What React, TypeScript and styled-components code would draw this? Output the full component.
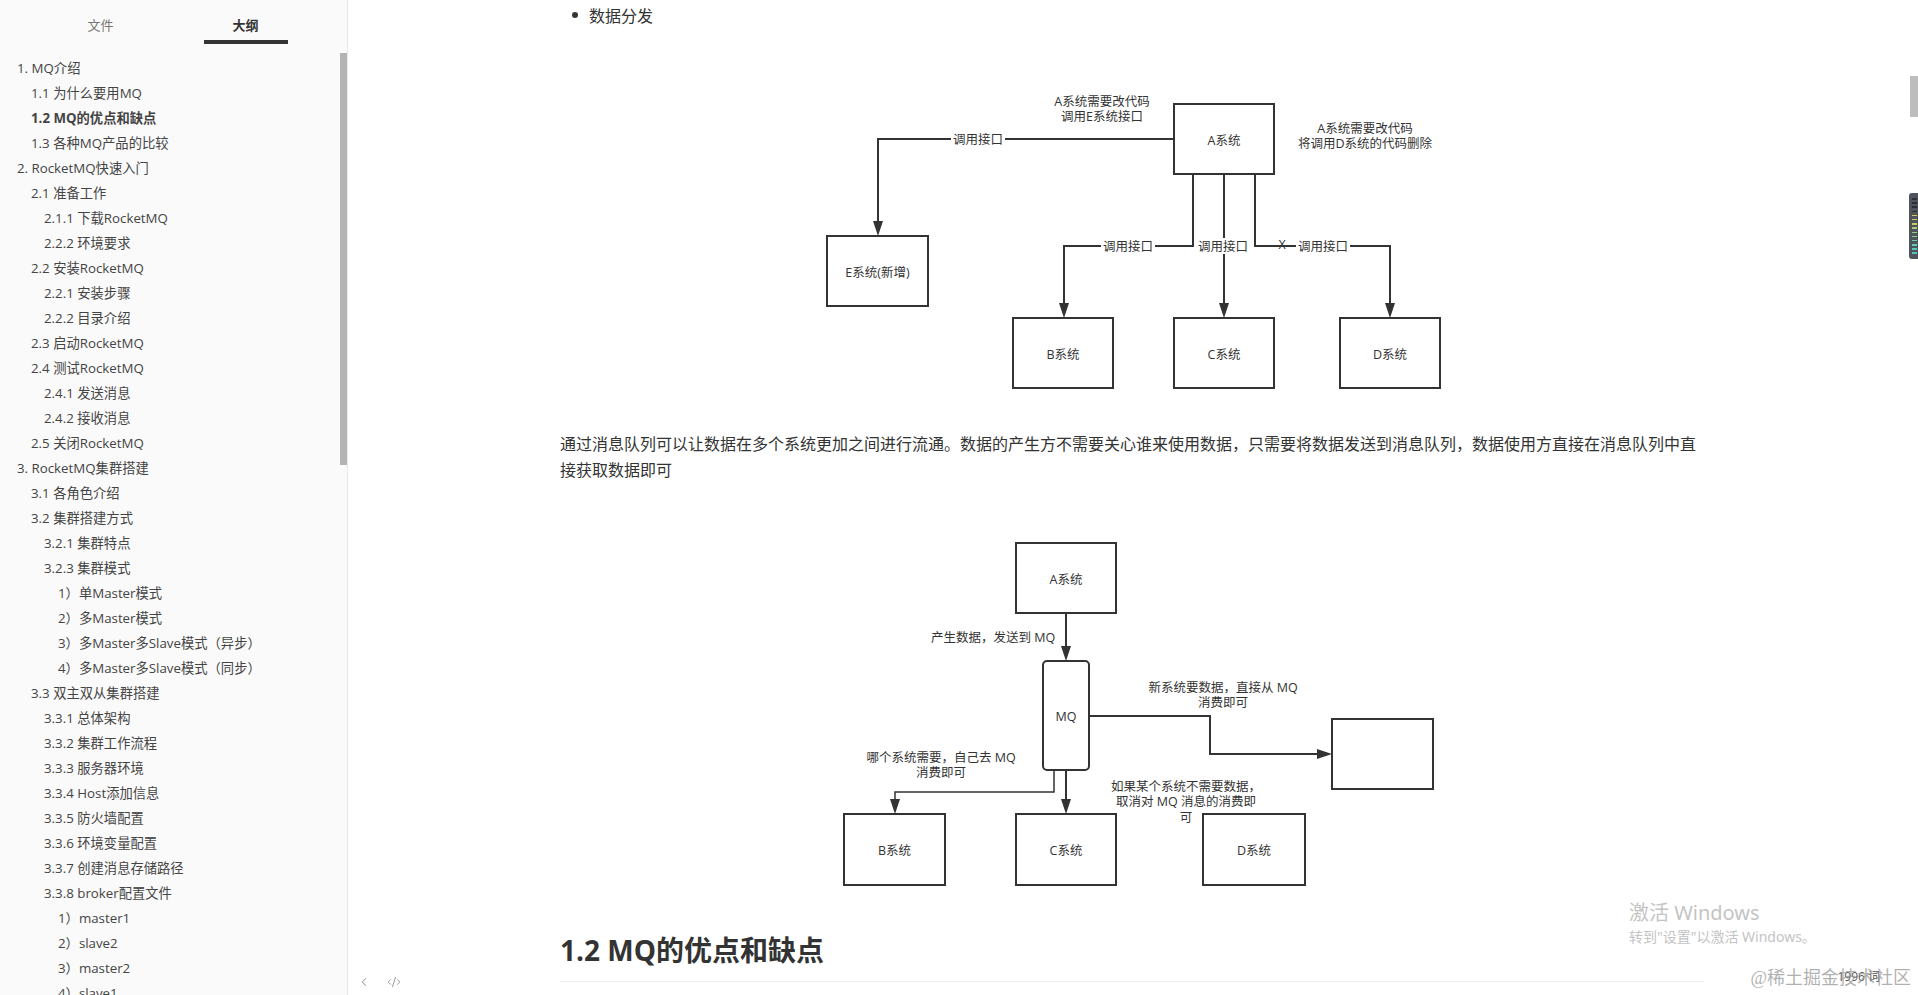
import React from "react";
import styled, { createGlobalStyle } from "styled-components";
import { ChevronLeft, CodeXml } from "lucide-react";

const GlobalStyle = createGlobalStyle`
    html, body {
        margin: 0;
        padding: 0;
        height: 100%;
        overflow: hidden;
    }
    body {
        font-family: "Open Sans", "Noto Sans CJK SC", sans-serif;
        color: #333;
        background: #fff;
    }
`;

const Shell = styled.div`
    display: flex;
    width: 1918px;
    height: 995px;
    overflow: hidden;
`;

/* 左侧：文件 / 大纲 */
const Sidebar = styled.aside`
    position: relative;
    flex: 0 0 347px;
    height: 100%;
    background: #fafafa;
    border-right: 1px solid #e8e8e8;
    overflow: hidden;
`;
const TabBar = styled.div`
    display: flex;
    padding-left: 28px;
    height: 44px;
`;
const Tab = styled.div<{ $active?: boolean }>`
    width: 145px;
    display: flex;
    flex-direction: column;
    align-items: center;
    padding-top: 15px;
    box-sizing: border-box;
    font-size: 13px;
    line-height: 20px;
    color: ${(p) => (p.$active ? "#333" : "#777")};
    font-weight: ${(p) => (p.$active ? 700 : 400)};
`;
const TabLine = styled.span<{ $active?: boolean }>`
    margin-top: 5px;
    width: 84px;
    height: 4px;
    background: ${(p) => (p.$active ? "#333" : "transparent")};
`;
const OutlineList = styled.ul`
    list-style: none;
    margin: 0;
    padding: 12px 0 0;
`;
const OutlineItem = styled.li<{ $level: number; $bold?: boolean }>`
    height: 25px;
    line-height: 25px;
    font-size: 13.3px;
    color: #444;
    white-space: nowrap;
    padding-left: ${(p) => [17, 31, 44, 58][p.$level - 1]}px;
    font-weight: ${(p) => (p.$bold ? 700 : 400)};
`;
const SideThumb = styled.div`
    position: absolute;
    left: 340px;
    top: 53px;
    width: 7px;
    height: 412px;
    background: #b3b3b3;
`;

/* 右侧：正文 */
const Main = styled.main`
    position: relative;
    flex: 1;
    height: 100%;
    overflow: hidden;
    background: #fff;
`;
const Content = styled.div`
    width: 1144px;
    margin-left: 212px;
    padding-top: 2px;
`;
const Bullets = styled.ul`
    list-style: none;
    margin: 0;
    padding: 0;
`;
const Bullet = styled.li`
    display: flex;
    align-items: center;
    height: 26px;
    font-size: 16px;
    color: #333;
`;
const Dot = styled.span`
    width: 6px;
    height: 6px;
    border-radius: 50%;
    background: #333;
    margin: 0 11px 0 12px;
`;
const Figure = styled.svg<{ $gap?: number }>`
    display: block;
    width: 1144px;
    margin-top: ${(p) => p.$gap ?? 0}px;
`;
const Para = styled.p`
    margin: 14px 0 0;
    font-size: 16px;
    line-height: 25.6px;
    color: #333;
`;
const Heading = styled.h2`
    margin: 16px 0 0;
    padding-bottom: 12px;
    font-size: 28px;
    line-height: 38px;
    font-weight: 700;
    color: #333;
    border-bottom: 1px solid #eee;
`;
const Footer = styled.div`
    position: absolute;
    left: 9px;
    bottom: 6px;
    display: flex;
    align-items: center;
    gap: 16px;
    color: #888;
`;
const WordCount = styled.span`
    position: absolute;
    right: 38px;
    bottom: 10px;
    font-size: 12px;
    color: #555;
`;
const Watermark = styled.div`
    position: absolute;
    left: 1281px;
    top: 899px;
    color: #c4c4c4;
    font-family: "Noto Sans", "Noto Sans CJK SC", sans-serif;
`;
const WatermarkTitle = styled.div`
    font-size: 20px;
    line-height: 28px;
`;
const WatermarkSub = styled.div`
    font-size: 14px;
    line-height: 20px;
`;
const SiteMark = styled.span`
    position: absolute;
    right: 7px;
    bottom: 6px;
    font-size: 18px;
    color: rgba(150, 150, 150, 0.75);
    font-family: "Liberation Serif", "Noto Sans CJK SC", serif;
`;
const MainThumb = styled.div`
    position: absolute;
    right: 0;
    top: 76px;
    width: 8px;
    height: 41px;
    background: #bdbdbd;
`;
const Meter = styled.div`
    position: absolute;
    right: -3px;
    top: 193px;
    width: 12px;
    height: 66px;
    padding: 5px 2px 5px 3px;
    box-sizing: border-box;
    border-radius: 3px;
    background: #4f535c;
    display: flex;
    flex-direction: column;
    justify-content: space-between;
`;
const MeterBar = styled.span<{ $color: string }>`
    height: 1.5px;
    width: 5px;
    background: ${(p) => p.$color};
`;

const outline: [number, string, boolean?][] = [
    [1, "1. MQ介绍"],
    [2, "1.1 为什么要用MQ"],
    [2, "1.2 MQ的优点和缺点", true],
    [2, "1.3 各种MQ产品的比较"],
    [1, "2. RocketMQ快速入门"],
    [2, "2.1 准备工作"],
    [3, "2.1.1 下载RocketMQ"],
    [3, "2.2.2 环境要求"],
    [2, "2.2 安装RocketMQ"],
    [3, "2.2.1 安装步骤"],
    [3, "2.2.2 目录介绍"],
    [2, "2.3 启动RocketMQ"],
    [2, "2.4 测试RocketMQ"],
    [3, "2.4.1 发送消息"],
    [3, "2.4.2 接收消息"],
    [2, "2.5 关闭RocketMQ"],
    [1, "3. RocketMQ集群搭建"],
    [2, "3.1 各角色介绍"],
    [2, "3.2 集群搭建方式"],
    [3, "3.2.1 集群特点"],
    [3, "3.2.3 集群模式"],
    [4, "1）单Master模式"],
    [4, "2）多Master模式"],
    [4, "3）多Master多Slave模式（异步）"],
    [4, "4）多Master多Slave模式（同步）"],
    [2, "3.3 双主双从集群搭建"],
    [3, "3.3.1 总体架构"],
    [3, "3.3.2 集群工作流程"],
    [3, "3.3.3 服务器环境"],
    [3, "3.3.4 Host添加信息"],
    [3, "3.3.5 防火墙配置"],
    [3, "3.3.6 环境变量配置"],
    [3, "3.3.7 创建消息存储路径"],
    [3, "3.3.8 broker配置文件"],
    [4, "1）master1"],
    [4, "2）slave2"],
    [4, "3）master2"],
    [4, "4）slave1"],
];

const meterColors = [
    "#2b2f36", "#2b2f36", "#2b2f36", "#2b2f36", "#d9c35a", "#d9c35a", "#c9c960",
    "#a8cc70", "#8fcf80", "#7ccf92", "#6ccfa2", "#5fcdb0", "#56c9b8", "#50c4bd",
];

/* 图中元素（页面坐标） */
const INK = "#333";
const FONT = "'Open Sans', 'Noto Sans CJK SC', sans-serif";

const Box = ({ x, y, w, h, label, r = 0 }: { x: number; y: number; w: number; h: number; label?: string; r?: number }) => (
    <g>
        <rect x={x} y={y} width={w} height={h} rx={r} fill="#fff" stroke={INK} strokeWidth={2} />
        {label && (
            <text x={x + w / 2} y={y + h / 2 + 1} textAnchor="middle" dominantBaseline="central" fontSize={12.5} fill={INK} fontFamily={FONT}>
                {label}
            </text>
        )}
    </g>
);

const Wire = ({ pts, arrow, width = 2 }: { pts: number[][]; arrow?: "down" | "right"; width?: number }) => {
    const [ex, ey] = pts[pts.length - 1];
    const line = pts.map((p, i) => (i === pts.length - 1 ? (arrow === "down" ? [p[0], p[1] - 12] : [p[0] - 12, p[1]]) : p));
    const head =
        arrow === "down"
            ? `${ex - 5},${ey - 15} ${ex + 5},${ey - 15} ${ex},${ey}`
            : `${ex - 15},${ey - 5} ${ex - 15},${ey + 5} ${ex},${ey}`;
    return (
        <g>
            <polyline points={line.map((p) => p.join(",")).join(" ")} fill="none" stroke={INK} strokeWidth={width} />
            {arrow && <polygon points={head} fill={INK} />}
        </g>
    );
};

const Note = ({ x, y, lines, bg }: { x: number; y: number; lines: string[]; bg?: boolean }) => (
    <g>
        {bg && <rect x={x - 27} y={y - 8} width={54} height={16} fill="#fff" />}
        {lines.map((t, i) => (
            <text key={i} x={x} y={y + i * 15.5} textAnchor="middle" dominantBaseline="central" fontSize={12.5} fill={INK} fontFamily={FONT}>
                {t}
            </text>
        ))}
    </g>
);

const DiagramCoupled = () => (
    <Figure viewBox="560 28 1144 390" height={390}>
        <Wire pts={[[1174, 139], [878, 139], [878, 236]]} arrow="down" />
        <Wire pts={[[1193, 174], [1193, 246], [1064, 246], [1064, 318]]} arrow="down" />
        <Wire pts={[[1224, 174], [1224, 318]]} arrow="down" />
        <Wire pts={[[1255, 174], [1255, 246], [1390, 246], [1390, 318]]} arrow="down" />
        <Box x={1174} y={104} w={100} h={70} label="A系统" />
        <Box x={827} y={236} w={101} h={70} label="E系统(新增)" />
        <Box x={1013} y={318} w={100} h={70} label="B系统" />
        <Box x={1174} y={318} w={100} h={70} label="C系统" />
        <Box x={1340} y={318} w={100} h={70} label="D系统" />
        <Note x={978} y={139} lines={["调用接口"]} bg />
        <Note x={1128} y={246} lines={["调用接口"]} bg />
        <Note x={1223} y={246} lines={["调用接口"]} bg />
        <Note x={1323} y={246} lines={["调用接口"]} bg />
        <Note x={1282} y={244} lines={["X"]} />
        <Note x={1102} y={101} lines={["A系统需要改代码", "调用E系统接口"]} />
        <Note x={1365} y={128} lines={["A系统需要改代码", "将调用D系统的代码删除"]} />
    </Figure>
);

const DiagramQueue = () => (
    <Figure viewBox="560 495 1144 420" height={420} $gap={12}>
        <Wire pts={[[1066, 613], [1066, 661]]} arrow="down" />
        <Wire pts={[[1089, 716], [1210, 716], [1210, 754], [1332, 754]]} arrow="right" />
        <Wire pts={[[1066, 770], [1066, 814]]} arrow="down" />
        <Wire pts={[[1054, 770], [1054, 792], [895, 792], [895, 814]]} arrow="down" width={1.5} />
        <Box x={1016} y={543} w={100} h={70} label="A系统" />
        <Box x={1043} y={661} w={46} h={109} r={4} label="MQ" />
        <Box x={1332} y={719} w={101} h={70} />
        <Box x={844} y={814} w={101} h={71} label="B系统" />
        <Box x={1016} y={814} w={100} h={71} label="C系统" />
        <Box x={1203} y={814} w={102} h={71} label="D系统" />
        <Note x={993} y={637} lines={["产生数据，发送到 MQ"]} />
        <Note x={1223} y={687} lines={["新系统要数据，直接从 MQ", "消费即可"]} />
        <Note x={941} y={757} lines={["哪个系统需要，自己去 MQ", "消费即可"]} />
        <Note x={1186} y={786} lines={["如果某个系统不需要数据，", "取消对 MQ 消息的消费即", "可"]} />
    </Figure>
);

export default function App() {
    return (
        <Shell>
            <GlobalStyle />
            <Sidebar>
                <TabBar>
                    <Tab>
                        文件
                        <TabLine />
                    </Tab>
                    <Tab $active>
                        大纲
                        <TabLine $active />
                    </Tab>
                </TabBar>
                <OutlineList>
                    {outline.map(([level, text, bold], i) => (
                        <OutlineItem key={i} $level={level} $bold={bold}>
                            {text}
                        </OutlineItem>
                    ))}
                </OutlineList>
                <SideThumb />
            </Sidebar>
            <Main>
                <Content>
                    <Bullets>
                        <Bullet>
                            <Dot />
                            数据分发
                        </Bullet>
                    </Bullets>
                    <DiagramCoupled />
                    <Para>
                        通过消息队列可以让数据在多个系统更加之间进行流通。数据的产生方不需要关心谁来使用数据，只需要将数据发送到消息队列，数据使用方直接在消息队列中直接获取数据即可
                    </Para>
                    <DiagramQueue />
                    <Heading>1.2 MQ的优点和缺点</Heading>
                </Content>
                <Footer>
                    <ChevronLeft size={14} strokeWidth={1.6} />
                    <CodeXml size={14} strokeWidth={1.4} />
                </Footer>
                <Watermark>
                    <WatermarkTitle>激活 Windows</WatermarkTitle>
                    <WatermarkSub>转到"设置"以激活 Windows。</WatermarkSub>
                </Watermark>
                <WordCount>1996 词</WordCount>
                <SiteMark>@稀土掘金技术社区</SiteMark>
                <MainThumb />
                <Meter>
                    {meterColors.map((c, i) => (
                        <MeterBar key={i} $color={c} />
                    ))}
                </Meter>
            </Main>
        </Shell>
    );
}
